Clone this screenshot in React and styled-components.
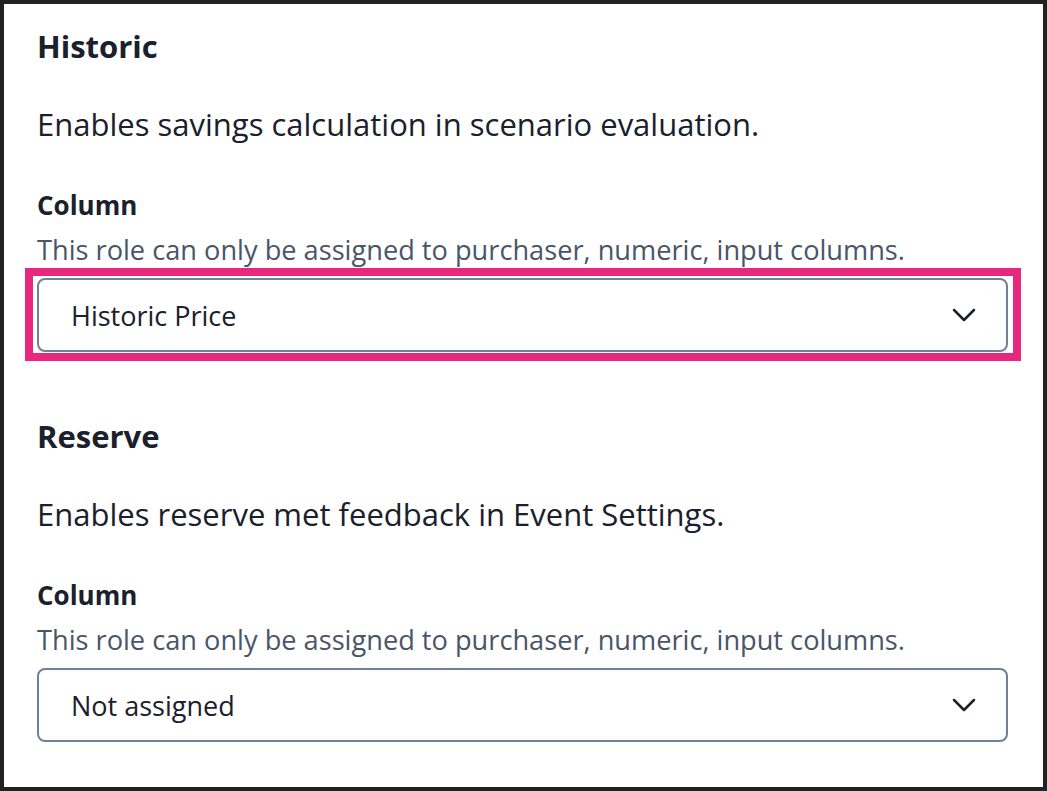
import React from 'react'
import styled, { createGlobalStyle } from 'styled-components'

const GlobalStyle = createGlobalStyle`
  html, body {
    margin: 0;
    padding: 0;
    background: #fff;
  }
  body {
    font-family: 'Open Sans', 'Noto Sans', sans-serif;
    color: #1a202c;
  }
`

const Frame = styled.div`
  width: 1047px;
  height: 791px;
  box-sizing: border-box;
  border: 4px solid #222;
  padding: 22px 35px 0 33px;
  background: #fff;
  overflow: hidden;
`

const Section = styled.section`
  display: flex;
  flex-direction: column;
  margin-bottom: ${props => props.gap || 0}px;
`

const Heading = styled.h2`
  margin: 0;
  font-size: 31px;
  line-height: 40px;
  font-weight: 700;
  color: #1a202c;
`

const Description = styled.p`
  margin: 38px 0 0;
  font-size: 31px;
  line-height: 40px;
  color: #1a202c;
`

const Label = styled.div`
  margin-top: 44px;
  font-size: 26px;
  line-height: 34px;
  font-weight: 700;
  color: #1a202c;
`

const Helper = styled.div`
  margin-top: 11px;
  font-size: 27.2px;
  line-height: 34px;
  color: #4a5568;
`

const SelectWrap = styled.div`
  margin: ${props => (props.highlighted ? '1px -13px -9px -12px' : '11px 0 0')};
  border: ${props => (props.highlighted ? '8px solid #e8287f' : 'none')};
  padding: ${props => (props.highlighted ? '2px 5px 1px 4px' : '0')};
`

const Select = styled.div`
  height: 74px;
  box-sizing: border-box;
  border: 2px solid #718096;
  border-radius: 8px;
  display: flex;
  align-items: center;
  justify-content: space-between;
  padding: 0 30px 0 32px;
  font-size: 27px;
  color: #1a202c;
  background: #fff;
`

const Chevron = () => (
  <svg width="24" height="14" viewBox="0 0 24 14" fill="none">
    <path d="M2 2l10 10L22 2" stroke="#1a202c" strokeWidth="2.5" strokeLinecap="round" strokeLinejoin="round" />
  </svg>
)

const RoleBlock = ({ title, description, value, highlighted, gap }) => (
  <Section gap={gap}>
    <Heading>{title}</Heading>
    <Description>{description}</Description>
    <Label>Column</Label>
    <Helper>This role can only be assigned to purchaser, numeric, input columns.</Helper>
    <SelectWrap highlighted={highlighted}>
      <Select>
        <span>{value}</span>
        <Chevron />
      </Select>
    </SelectWrap>
  </Section>
)

export default function App() {
  return (
    <>
      <GlobalStyle />
      <Frame>
        <RoleBlock
          title="Historic"
          description="Enables savings calculation in scenario evaluation."
          value="Historic Price"
          highlighted
          gap={64}
        />
        <RoleBlock
          title="Reserve"
          description="Enables reserve met feedback in Event Settings."
          value="Not assigned"
        />
      </Frame>
    </>
  )
}
